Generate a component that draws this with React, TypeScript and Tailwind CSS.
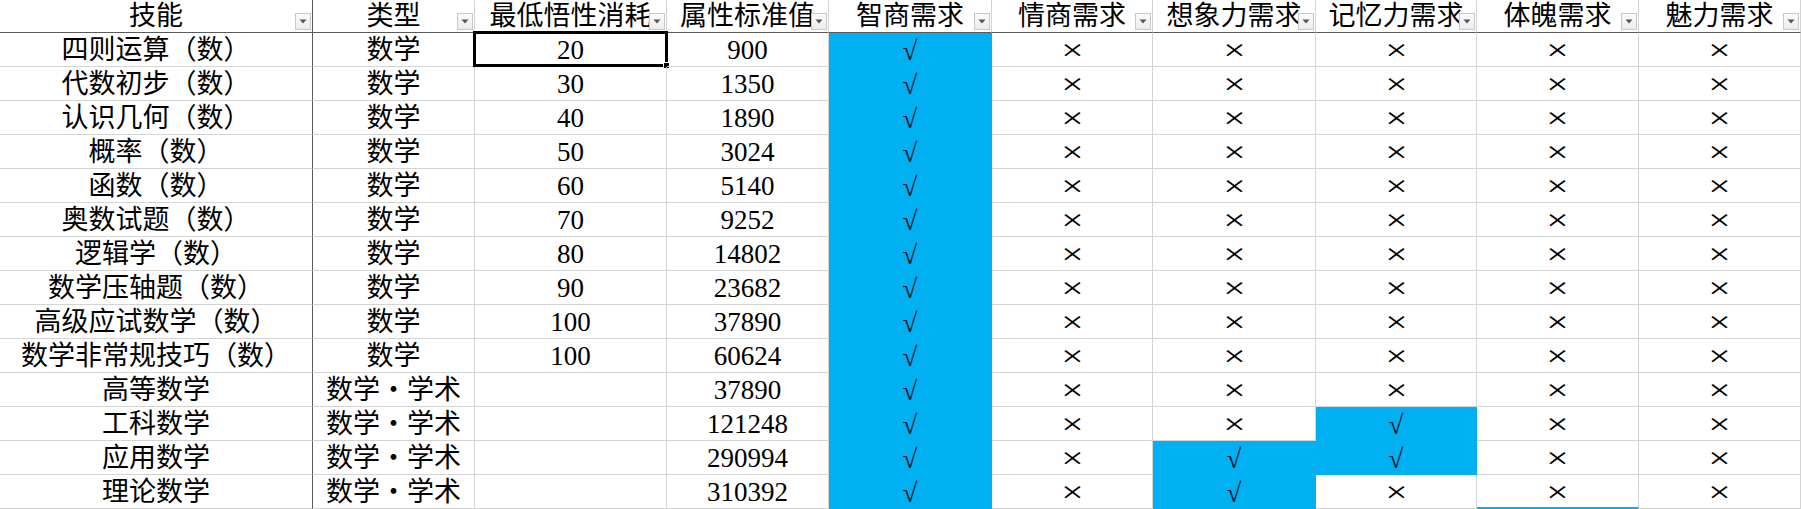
import React from "react";

type Row = {
  name: string;
  type: string;
  cost: string;
  std: string;
  marks: boolean[]; // 智商, 情商, 想象力, 记忆力, 体魄, 魅力
};

const rows: Row[] = [
  { name: "四则运算（数）", type: "数学", cost: "20", std: "900", marks: [true, false, false, false, false, false] },
  { name: "代数初步（数）", type: "数学", cost: "30", std: "1350", marks: [true, false, false, false, false, false] },
  { name: "认识几何（数）", type: "数学", cost: "40", std: "1890", marks: [true, false, false, false, false, false] },
  { name: "概率（数）", type: "数学", cost: "50", std: "3024", marks: [true, false, false, false, false, false] },
  { name: "函数（数）", type: "数学", cost: "60", std: "5140", marks: [true, false, false, false, false, false] },
  { name: "奥数试题（数）", type: "数学", cost: "70", std: "9252", marks: [true, false, false, false, false, false] },
  { name: "逻辑学（数）", type: "数学", cost: "80", std: "14802", marks: [true, false, false, false, false, false] },
  { name: "数学压轴题（数）", type: "数学", cost: "90", std: "23682", marks: [true, false, false, false, false, false] },
  { name: "高级应试数学（数）", type: "数学", cost: "100", std: "37890", marks: [true, false, false, false, false, false] },
  { name: "数学非常规技巧（数）", type: "数学", cost: "100", std: "60624", marks: [true, false, false, false, false, false] },
  { name: "高等数学", type: "数学・学术", cost: "", std: "37890", marks: [true, false, false, false, false, false] },
  { name: "工科数学", type: "数学・学术", cost: "", std: "121248", marks: [true, false, false, true, false, false] },
  { name: "应用数学", type: "数学・学术", cost: "", std: "290994", marks: [true, false, true, true, false, false] },
  { name: "理论数学", type: "数学・学术", cost: "", std: "310392", marks: [true, false, true, false, false, false] },
];

const headers = ["技能", "类型", "最低悟性消耗", "属性标准值", "智商需求", "情商需求", "想象力需求", "记忆力需求", "体魄需求", "魅力需求"];

function FilterButton() {
  return (
    <div className="absolute right-[1px] bottom-[2px] w-[16px] h-[17px] border border-[#c8c8c8] bg-gradient-to-b from-[#fbfbfb] to-[#ececec] flex items-center justify-center">
      <svg width="8" height="5" viewBox="0 0 8 5">
        <path d="M0.5 0.5 L7.5 0.5 L4 4.5 Z" fill="#555" />
      </svg>
    </div>
  );
}

function HeaderCell({ text, first }: { text: string; first?: boolean }) {
  return (
    <div
      className={
        "relative h-[33px] border-b border-b-[#5a5a5a] border-r flex items-center justify-center whitespace-nowrap pb-[1px] " +
        (first ? "border-r-[#5a5a5a]" : "border-r-[#d4d4d4]")
      }
    >
      <span className="text-[27px] leading-[30px] font-['Liberation_Serif','Noto_Sans_CJK_SC',serif] text-black">{text}</span>
      <FilterButton />
    </div>
  );
}

function TextCell({ text, first, children }: { text?: string; first?: boolean; children?: React.ReactNode }) {
  return (
    <div
      className={
        "relative h-[34px] border-b border-b-[#d4d4d4] border-r flex items-end justify-center whitespace-nowrap overflow-visible " +
        (first ? "border-r-[#5a5a5a]" : "border-r-[#d4d4d4]")
      }
    >
      <span className="text-[27px] leading-[32px] font-['Liberation_Serif','Noto_Sans_CJK_SC',serif] text-black">{text}</span>
      {children}
    </div>
  );
}

function MarkCell({ on, bottomBlue }: { on: boolean; bottomBlue?: boolean }) {
  if (on) {
    return (
      <div className="h-[34px] bg-[#00b0f0] border-b border-r border-[#00b0f0] flex items-center justify-center">
        <span className="inline-block h-[30px] text-[27px] leading-[30px] pt-[1px] font-bold font-['Liberation_Serif',serif] text-[#0b1530]">√</span>
      </div>
    );
  }
  return (
    <div
      className={
        "h-[34px] border-r border-r-[#d4d4d4] flex items-center justify-center " +
        (bottomBlue ? "border-b-2 border-b-[#00b0f0]" : "border-b border-b-[#d4d4d4]")
      }
    >
      <span className="inline-block text-[30px] leading-[30px] pt-[1px] scale-x-[1.32] font-['Liberation_Serif',serif] text-black">×</span>
    </div>
  );
}

export default function App() {
  return (
    <div className="w-[1801px] h-[509px] bg-white overflow-hidden">
      <div className="grid grid-cols-[313px_162px_192px_162px_163px_161px_163px_161px_162px_162px]">
        {headers.map((h, i) => (
          <HeaderCell key={h} text={h} first={i === 0} />
        ))}
        {rows.map((r, ri) => (
          <React.Fragment key={r.name}>
            <TextCell text={r.name} first />
            <TextCell text={r.type} />
            <TextCell text={r.cost}>
              {ri === 0 && (
                <div className="absolute -left-[2px] -top-[2px] w-[195px] h-[36px] border-[3px] border-black pointer-events-none">
                  <div className="absolute -right-[5px] -bottom-[5px] w-[7px] h-[7px] bg-black border border-white" />
                </div>
              )}
            </TextCell>
            <TextCell text={r.std} />
            {r.marks.map((m, mi) => (
              <MarkCell key={mi} on={m} bottomBlue={ri === rows.length - 1 && mi === 4} />
            ))}
          </React.Fragment>
        ))}
      </div>
    </div>
  );
}
